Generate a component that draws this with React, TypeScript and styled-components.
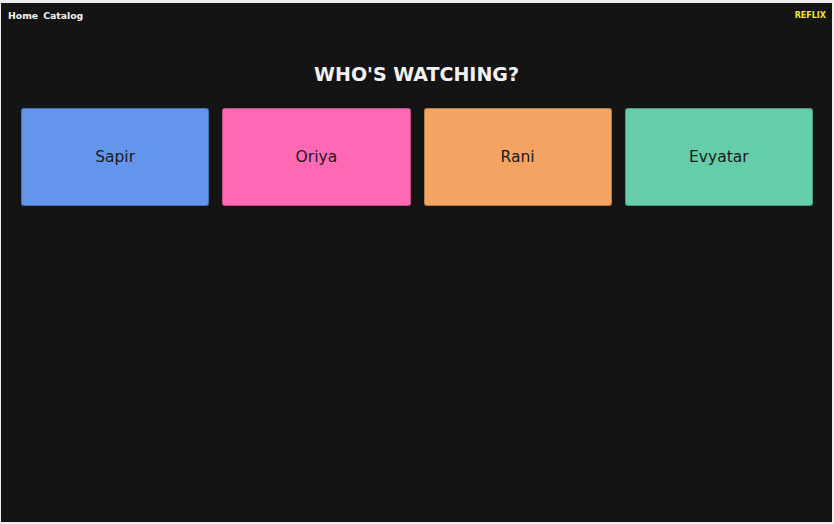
import React from "react";
import styled, { createGlobalStyle } from "styled-components";

const Global = createGlobalStyle`
  html, body { margin: 0; padding: 0; background: #ececec; }
  body { padding: 3px 2px 2px 1px; }
`;

const Screen = styled.div`
  background: #141414;
  height: 519px;
  display: flex;
  flex-direction: column;
  font-family: "DejaVu Sans", Verdana, sans-serif;
`;

const NavBar = styled.nav`
  display: flex;
  justify-content: space-between;
  align-items: center;
  padding: 5px 6px 0 7px;
  height: 14px;
`;

const Links = styled.div`
  display: flex;
  gap: 5px;
`;

const NavLink = styled.a`
  color: #f4f4f4;
  font-size: 9.3px;
  font-weight: bold;
  text-decoration: none;
`;

const Brand = styled.span`
  color: #eee83a;
  font-size: 8px;
  font-weight: bold;
`;

const Title = styled.h1`
  margin: 40px 0 0;
  text-align: center;
  color: #f2f2f2;
  font-size: 19px;
  font-weight: bold;
  line-height: 24px;
`;

const Grid = styled.div`
  display: grid;
  grid-template-columns: repeat(4, 1fr);
  gap: 13px;
  padding: 22px 19px 0 20px;
`;

const Card = styled.div<{ $bg: string }>`
  background: ${(p) => p.$bg};
  height: 98px;
  border-radius: 3px;
  border: 1px solid rgba(0, 0, 0, 0.25);
  box-sizing: border-box;
  display: flex;
  align-items: center;
  justify-content: center;
  color: #1a1a1a;
  font-size: 15.5px;
`;

const users = [
  { name: "Sapir", color: "#6495ed" },
  { name: "Oriya", color: "#ff69b4" },
  { name: "Rani", color: "#f4a462" },
  { name: "Evyatar", color: "#66cdaa" },
];

export default function App() {
  return (
    <>
      <Global />
      <Screen>
        <NavBar>
          <Links>
            <NavLink href="#">Home</NavLink>
            <NavLink href="#">Catalog</NavLink>
          </Links>
          <Brand>REFLIX</Brand>
        </NavBar>
        <Title>WHO'S WATCHING?</Title>
        <Grid>
          {users.map((u) => (
            <Card key={u.name} $bg={u.color}>
              {u.name}
            </Card>
          ))}
        </Grid>
      </Screen>
    </>
  );
}
